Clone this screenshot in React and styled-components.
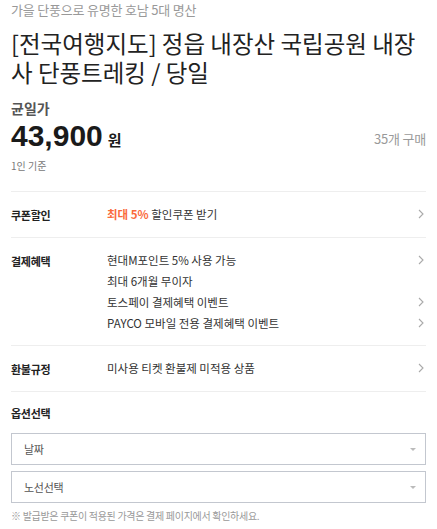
import styled, { createGlobalStyle } from "styled-components";

const GlobalStyle = createGlobalStyle`
    body {
        margin: 0;
        background: #fff;
        font-family: "Noto Sans CJK KR", "Liberation Sans", sans-serif;
        color: #222;
    }
`;

const benefits = [
    { text: "현대M포인트 5% 사용 가능", link: true },
    { text: "최대 6개월 무이자", link: false },
    { text: "토스페이 결제혜택 이벤트", link: true },
    { text: "PAYCO 모바일 전용 결제혜택 이벤트", link: true }
];

const Chevron = () => (
    <svg width="6" height="10" viewBox="0 0 6 10">
        <path d="M1 1 L5 5 L1 9" fill="none" stroke="#aaa" strokeWidth="1.1" />
    </svg>
);

const App = () => {
    return (
        <Page>
            <GlobalStyle />
            <Subtitle>가을 단풍으로 유명한 호남 5대 명산</Subtitle>
            <Title>[전국여행지도] 정읍 내장산 국립공원 내장사 단풍트레킹 / 당일</Title>

            <PriceBlock>
                <PriceLabel>균일가</PriceLabel>
                <PriceRow>
                    <Price>
                        43,900<Won>원</Won>
                    </Price>
                    <Sold>35개 구매</Sold>
                </PriceRow>
                <Basis>1인 기준</Basis>
            </PriceBlock>

            <InfoRow>
                <Label>쿠폰할인</Label>
                <Values>
                    <Line>
                        <span>
                            <Accent>최대 5%</Accent> 할인쿠폰 받기
                        </span>
                        <Chevron />
                    </Line>
                </Values>
            </InfoRow>

            <InfoRow>
                <Label>결제혜택</Label>
                <Values>
                    {benefits.map((b) => (
                        <Line key={b.text}>
                            <span>{b.text}</span>
                            {b.link && <Chevron />}
                        </Line>
                    ))}
                </Values>
            </InfoRow>

            <InfoRow>
                <Label>환불규정</Label>
                <Values>
                    <Line>
                        <span>미사용 티켓 환불제 미적용 상품</span>
                        <Chevron />
                    </Line>
                </Values>
            </InfoRow>

            <OptionSection>
                <OptionTitle>옵션선택</OptionTitle>
                <Select>
                    <span>날짜</span>
                    <Caret />
                </Select>
                <Select>
                    <span>노선선택</span>
                    <Caret />
                </Select>
                <Note>※ 발급받은 쿠폰이 적용된 가격은 결제 페이지에서 확인하세요.</Note>
            </OptionSection>
        </Page>
    );
};

const Page = styled.div`
    width: 437px;
    box-sizing: border-box;
    padding: 0 11px;
`;

const Subtitle = styled.div`
    font-size: 13px;
    line-height: 18px;
    color: #999;
    padding-top: 1px;
    letter-spacing: -0.2px;
`;

const Title = styled.h1`
    margin: 10px 0 0;
    font-size: 23.5px;
    line-height: 29px;
    font-weight: 400;
    color: #222;
`;

const PriceBlock = styled.div`
    padding: 11px 0 17px;
    border-bottom: 1px solid #eee;
`;

const PriceLabel = styled.div`
    font-size: 14px;
    font-weight: 700;
    color: #555;
    line-height: 20px;
`;

const PriceRow = styled.div`
    display: flex;
    justify-content: space-between;
    align-items: center;
    height: 32px;
    margin-top: 4px;
`;

const Price = styled.div`
    display: flex;
    align-items: baseline;
    font-family: "Liberation Sans", "Noto Sans CJK KR", sans-serif;
    font-size: 30px;
    font-weight: 700;
    color: #1a1a1a;
    line-height: 32px;
`;

const Won = styled.span`
    font-family: "Noto Sans CJK KR", sans-serif;
    font-size: 15px;
    margin-left: 5px;
`;

const Sold = styled.div`
    font-size: 13px;
    color: #999;
    letter-spacing: -0.2px;
`;

const Basis = styled.div`
    margin-top: 4px;
    font-size: 10px;
    color: #777;
    line-height: 16px;
`;

const InfoRow = styled.div`
    display: flex;
    padding: 11px 0 12px;
    border-bottom: 1px solid #eee;
`;

const Label = styled.div`
    width: 96px;
    flex-shrink: 0;
    font-size: 11px;
    font-weight: 700;
    color: #222;
    line-height: 20px;
    letter-spacing: -0.3px;
    padding-top: 2px;
`;

const Values = styled.div`
    flex: 1;
    display: flex;
    flex-direction: column;
`;

const Line = styled.div`
    display: flex;
    justify-content: space-between;
    align-items: center;
    height: 21px;
    font-size: 11.5px;
    color: #333;
    padding-right: 2px;
`;

const Accent = styled.span`
    color: #fa6a3c;
    font-weight: 700;
`;

const OptionSection = styled.div`
    padding-top: 11px;
`;

const OptionTitle = styled.div`
    font-size: 11px;
    font-weight: 700;
    line-height: 20px;
    letter-spacing: -0.3px;
    margin-bottom: 10px;
`;

const Select = styled.div`
    display: flex;
    justify-content: space-between;
    align-items: center;
    height: 32px;
    box-sizing: border-box;
    border: 1px solid #c3c7cf;
    padding: 0 9px 0 12px;
    margin-bottom: 6px;
    font-size: 11px;
    letter-spacing: -0.3px;
    color: #555;
`;

const Caret = styled.span`
    width: 0;
    height: 0;
    border-left: 3.5px solid transparent;
    border-right: 3.5px solid transparent;
    border-top: 3.5px solid #bbb;
`;

const Note = styled.div`
    margin-top: 5px;
    font-size: 10px;
    line-height: 14px;
    color: #999;
    letter-spacing: -0.3px;
`;

export default App;
